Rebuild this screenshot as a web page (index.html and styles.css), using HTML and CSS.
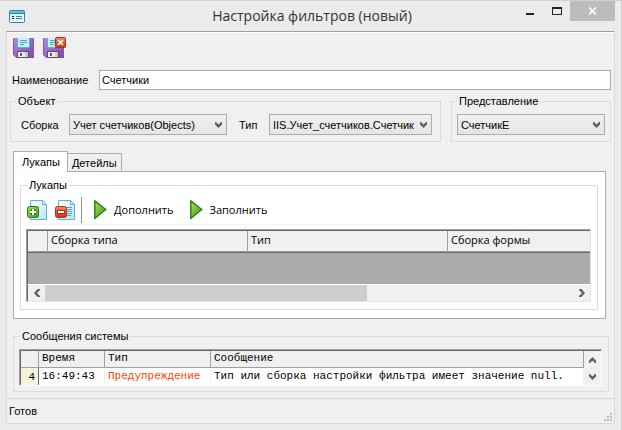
FILE: index.html
```html
<!DOCTYPE html>
<html lang="ru">
<head>
<meta charset="utf-8">
<title>Настройка фильтров (новый)</title>
<link rel="stylesheet" href="styles.css">
</head>
<body>
<svg class="defs" aria-hidden="true">
  <defs>
    <linearGradient id="violet" x2="1" y2="1"><stop offset="0" stop-color="#b58ae0"/><stop offset="1" stop-color="#7f45ae"/></linearGradient>
    <linearGradient id="paper" x2="1" y2="1"><stop offset="0" stop-color="#ffffff"/><stop offset="1" stop-color="#b4e6f4"/></linearGradient>
    <linearGradient id="green" x2="1" y2="1"><stop offset="0" stop-color="#a9dd5c"/><stop offset="1" stop-color="#3f9a1a"/></linearGradient>
    <linearGradient id="red" x2="0" y2="1"><stop offset="0" stop-color="#f58a64"/><stop offset="1" stop-color="#c9320f"/></linearGradient>
    <g id="disk">
      <path d="M0 0h21v20H3l-3-3z" fill="url(#violet)"/>
      <path d="M.5 .5v16M20.500 .5v19" stroke="#8a55b8" fill="none"/>
      <path d="M4 0h13v9l-1 1H5L4 9z" fill="#5eb0cf"/>
      <path d="M5 0h11v9H5z" fill="#c5f1fc"/>
      <path d="M7 2.500h7M7 4.500h7M7 6.500h4" stroke="#579fbb"/>
      <path d="M4 13h12v7H4z" fill="#555"/>
      <path d="M5 14h10v5H5z" fill="#eee"/>
      <path d="M7 15h2v3H7z" fill="#7648a8"/>
      <path d="M12 14h3v5h-3z" fill="#ccc"/>
    </g>
    <g id="sheet">
      <path d="M3.500 .5h12l4 4v15h-16z" fill="url(#paper)" stroke="#5db3d1"/>
      <path d="M15.500 .5v4h4z" fill="#e4f8ff" stroke="#5db3d1"/>
    </g>
    <path id="play" d="M.8 .8l11 8.700-11 9z" fill="url(#green)" stroke="#2b8713" stroke-width="1.500" stroke-linejoin="round"/>
    <path id="chevron" d="M1 0h1l2.500 2.500L7 0h1v2.500L4.500 6 1 2.500z" fill="#606060"/>
  </defs>
</svg>

<div class="window">
  <header class="titlebar">
    <svg class="app-icon" width="16" height="13" viewBox="0 0 16 13" aria-hidden="true">
      <rect x=".5" y=".5" width="15" height="12" rx="1" fill="#e6f5fa" stroke="#2a87a8"/>
      <path d="M1 1h14v2H1z" fill="#62c1df"/>
      <path d="M1 3.500h14" stroke="#2a87a8"/>
      <path d="M3 6h2v1H3zM3 8h2v1H3z" fill="#222"/>
      <path d="M7 6.500h6M7 8.500h6" stroke="#3987a5"/>
    </svg>
    <h1 class="title">Настройка фильтров (новый)</h1>
    <div class="caption-buttons">
      <button class="caption" type="button" aria-label="Свернуть"><svg width="8" height="8"><path d="M0 6h8v2H0z" fill="#222"/></svg></button>
      <button class="caption" type="button" aria-label="Развернуть"><svg width="10" height="8"><path d="M0 0h10v8H0zM1 2v5h8V2z" fill="#222" fill-rule="evenodd"/></svg></button>
      <button class="caption close" type="button" aria-label="Закрыть"><svg width="9" height="8" viewBox="0 0 9 8"><path d="M1 .5l7 7M8 .5l-7 7" stroke="#fff" stroke-width="1.700"/></svg></button>
    </div>
  </header>

  <main class="client">
    <div class="toolbar">
      <button class="tool" type="button" aria-label="Сохранить"><svg width="24" height="22"><use href="#disk" y="1"/></svg></button>
      <button class="tool" type="button" aria-label="Сохранить и закрыть">
        <svg width="24" height="22"><use href="#disk" y="1"/><rect x="12.500" y=".5" width="10" height="10" rx="1" fill="url(#red)" stroke="#a92e16"/><path d="M15 3l5 5M20 3l-5 5" stroke="#fff" stroke-width="1.500"/></svg>
      </button>
    </div>

    <div class="name-row">
      <label for="name">Наименование</label>
      <input id="name" type="text" value="Счетчики">
    </div>

    <div class="groups">
      <fieldset class="group object">
        <legend>Объект</legend>
        <div class="fields">
          <label for="assembly">Сборка</label>
          <div class="combo"><select id="assembly"><option>Учет счетчиков(Objects)</option></select><svg width="9" height="6"><use href="#chevron"/></svg></div>
          <label for="type" class="type-label">Тип</label>
          <div class="combo"><select id="type"><option>IIS.Учет_счетчиков.Счетчик</option></select><svg width="9" height="6"><use href="#chevron"/></svg></div>
        </div>
      </fieldset>
      <fieldset class="group view">
        <legend>Представление</legend>
        <div class="combo"><select aria-label="Представление"><option>СчетчикE</option></select><svg width="9" height="6"><use href="#chevron"/></svg></div>
      </fieldset>
    </div>

    <div class="tabs" role="tablist">
      <button class="tab active" type="button" role="tab" aria-selected="true">Лукапы</button>
      <button class="tab" type="button" role="tab" aria-selected="false">Детейлы</button>
    </div>
    <section class="panel" role="tabpanel">
      <fieldset class="group lookups">
        <legend>Лукапы</legend>
        <div class="grid-tools">
          <button class="tool" type="button" aria-label="Добавить">
            <svg width="22" height="21"><use href="#sheet"/><rect x=".5" y="6.500" width="11" height="11" rx="2" fill="url(#green)" stroke="#2b7d20"/><path d="M6 9v6M3 12h6" stroke="#2b7d20" stroke-width="4"/><path d="M6 9v6M3 12h6" stroke="#fff" stroke-width="2"/></svg>
          </button>
          <button class="tool" type="button" aria-label="Удалить">
            <svg width="22" height="21"><use href="#sheet"/><path d="M11 7.500h6M11 9.500h6M11 11.500h6M11 13.500h6M11 15.500h5" stroke="#4ba1c0"/><rect x=".5" y="6.500" width="11" height="11" rx="2" fill="url(#red)" stroke="#b83218"/><path d="M2 12h8" stroke="#a92c14" stroke-width="4"/><path d="M3 12h6" stroke="#fff" stroke-width="2"/></svg>
          </button>
          <span class="separator"></span>
          <button class="tool action" type="button"><svg width="13" height="20"><use href="#play"/></svg>Дополнить</button>
          <button class="tool action" type="button"><svg width="13" height="20"><use href="#play"/></svg>Заполнить</button>
        </div>
        <div class="grid">
          <div class="grid-view">
            <table class="lookup-table">
              <colgroup><col class="c-mark"><col><col><col></colgroup>
              <thead><tr><th></th><th>Сборка типа</th><th>Тип</th><th>Сборка формы</th></tr></thead>
            </table>
          </div>
          <div class="hscroll">
            <button type="button" aria-label="Влево"><svg width="6" height="8"><path d="M3.500 0H6v1L3 4l3 3v1H3.500L0 4z" fill="#606060"/></svg></button>
            <div class="track"><div class="thumb"></div></div>
            <button type="button" aria-label="Вправо"><svg width="6" height="8"><path d="M2.500 0H0v1l3 3-3 3v1h2.500L6 4z" fill="#606060"/></svg></button>
          </div>
        </div>
      </fieldset>
    </section>

    <fieldset class="group messages">
      <legend>Сообщения системы</legend>
      <div class="log">
        <table class="log-table">
          <colgroup><col class="l-num"><col class="l-time"><col class="l-type"><col></colgroup>
          <thead><tr><th></th><th>Время</th><th>Тип</th><th>Сообщение</th></tr></thead>
          <tbody><tr><th scope="row">4</th><td>16:49:43</td><td class="warning">Предупреждение</td><td>Тип или сборка настройки фильтра имеет значение null.</td></tr></tbody>
        </table>
        <div class="vscroll">
          <button type="button" aria-label="Вверх"><svg width="9" height="6"><path d="M1 6h1l2.500-2.500L7 6h1V3.500L4.500 0 1 3.500z" fill="#606060"/></svg></button>
          <button type="button" aria-label="Вниз"><svg width="9" height="6"><use href="#chevron"/></svg></button>
        </div>
      </div>
    </fieldset>

    <footer class="status">
      <span>Готов</span>
      <svg class="grip" width="8" height="8" aria-hidden="true"><path d="M6 0h2v2H6zM3 3h2v2H3zM6 3h2v2H6zM0 6h2v2H0zM3 6h2v2H3zM6 6h2v2H6z" fill="#bbb"/></svg>
    </footer>
  </main>
</div>
</body>
</html>
```

FILE: styles.css
```css
* { box-sizing: border-box; }

body {
  margin: 0;
  background: #ebebeb;
  color: #000;
  font: 11px/14px "Liberation Sans", Arial, sans-serif;
}

button, input, select { font: inherit; color: inherit; margin: 0; border-radius: 0; }
button { padding: 0; border: 0; background: none; }
svg { display: block; }
.defs { position: absolute; width: 0; height: 0; }

.window {
  display: flex;
  flex-direction: column;
  min-height: 100vh;
  padding: 0 6px 6px;
  border-top: 1px solid #d0d0d0;
  border-right: 1px solid #d0d0d0;
}

/* Title bar */
.titlebar {
  display: grid;
  grid-template-columns: 1fr auto 1fr;
  align-items: center;
  height: 30px;
  padding-left: 3px;
}
.title {
  margin: 0;
  color: #333;
  font: 14px/20px "Open Sans", "Noto Sans", sans-serif;
}
.caption-buttons { display: flex; justify-content: flex-end; align-self: start; }
.caption { display: grid; place-items: center; width: 27px; height: 20px; }
.close { width: 45px; background: #bcbcbc; }

/* Client area */
.client {
  display: flex;
  flex-direction: column;
  flex: 1;
  border: 1px solid #d9d9d9;
  border-top-color: #a0a0a0;
  background: #f0f0f0;
  box-shadow: inset 0 1px #fff;
}
.toolbar { display: flex; align-items: flex-start; gap: 6px; height: 38px; padding: 5px 6px; }

.name-row { display: flex; align-items: center; padding: 0 3px 0 5px; }
.name-row label { width: 87px; }
.name-row input {
  flex: 1;
  height: 20px;
  padding: 0 2px;
  border: 1px solid #ababb0;
  background: #fff;
}

/* Group boxes */
.group { min-width: 0; margin: 0; border: 1px solid #dcdcdc; }
.group legend { height: 14px; padding: 0 2px; }
.groups { display: flex; gap: 10px; margin-top: 4px; padding: 0 3px; }
.object { flex: 1; padding: 6px 8px 6px 5px; }
.view { width: 160px; padding: 6px 5px; }
.fields { display: grid; grid-template-columns: 48px 158px 42px 1fr; align-items: center; padding-left: 5px; }
.type-label { padding-left: 12px; }

.combo { display: grid; align-items: center; min-width: 0; }
.combo select, .combo svg { grid-area: 1 / 1; }
.combo select {
  appearance: none;
  width: 100%;
  height: 21px;
  padding: 0 16px 0 3px;
  border: 1px solid #acacac;
  background: linear-gradient(#f0f0f0, #e5e5e5);
}
.combo svg { justify-self: end; margin-right: 4px; pointer-events: none; }

/* Tabs */
.tabs { display: flex; align-items: flex-end; height: 20px; margin: 9px 8px 0 6px; }
.tab { height: 18px; padding: 0 4px; border: 1px solid #acacac; border-width: 1px 1px 0 0; }
.tab.active { height: 21px; margin-bottom: -1px; padding: 0 7px 0 8px; border-left-width: 1px; background: #fff; z-index: 1; }
.panel {
  display: flex;
  flex: 1;
  margin: 0 8px 0 6px;
  padding: 6px 7px 8px 6px;
  border: 1px solid #acacac;
  background: #fff;
}
.lookups { display: flex; flex-direction: column; flex: 1; padding: 0 6px 7px 5px; }
.lookups legend, .messages legend { margin-left: 1px; }

.grid-tools { display: flex; align-items: flex-start; height: 33px; padding: 8px 0 0 1px; border-bottom: 1px solid #f5f5f5; }
.grid-tools .tool + .tool { margin-left: 6px; }
.separator { width: 1px; height: 26px; margin: -3px 12px 0 4px; background: #909090; }
.action { display: flex; align-items: center; gap: 7px; height: 20px; font: 11px/14px "Open Sans", "Noto Sans", sans-serif; }
.grid-tools .action + .action { margin-left: 16px; }

/* Lookup grid */
.grid {
  display: flex;
  flex-direction: column;
  flex: 1;
  margin-top: 4px;
  border: 1px solid #a0a0a0;
  border-right-color: #e3e3e3;
  border-bottom-color: #e3e3e3;
}
.grid-view { flex: 1; min-height: 54px; overflow: hidden; border-top: 1px solid #696969; border-left: 1px solid #696969; background: #ababab; }
table { border-spacing: 0; table-layout: fixed; }
th { font-weight: normal; text-align: left; }
.lookup-table { width: 620px; }
.lookup-table col { width: 200px; }
.lookup-table col.c-mark { width: 20px; }
.lookup-table th {
  height: 22px;
  padding: 0 3px 4px;
  border-right: 1px solid #a0a0a0;
  border-bottom: 1px solid #696969;
  background: #f0f0f0;
  box-shadow: inset 0 -1px #a0a0a0;
  font: 11px/14px "Open Sans", "Noto Sans", sans-serif;
}
.hscroll { display: flex; height: 17px; border-top: 1px solid #fff; border-left: 1px solid #696969; background: #f0f0f0; }
.hscroll button { display: grid; place-items: center; width: 17px; }
.track { flex: 1; }
.thumb { width: 61%; height: 100%; background: #cdcdcd; }

/* System messages */
.messages { margin: 10px 5px 0 6px; padding: 6px 6px 5px 5px; }
.log {
  display: flex;
  height: 37px;
  border: 1px solid #a0a0a0;
  border-right-color: #fff;
  border-bottom-color: #fff;
  box-shadow: inset 1px 1px #696969;
  background: #fff;
  padding: 1px 0 0 1px;
}
.log-table { flex: 1; width: 100%; font-family: "Liberation Mono", "Courier New", monospace; }
.l-num { width: 18px; }
.l-time { width: 66px; }
.l-type { width: 106px; }
.log-table th, .log-table td { height: 17px; padding: 0 3px 2px; white-space: nowrap; }
.log-table thead th { border-right: 1px solid #a0a0a0; border-bottom: 1px solid #a0a0a0; background: #f0f0f0; }
.log-table td { border-right: 1px solid #f0f0f0; }
.log-table tbody th { padding-bottom: 0; border-right: 1px solid #696969; background: #f5f5dc; text-align: right; }
.log-table .warning { color: #ff4500; }
.vscroll { display: flex; flex-direction: column; width: 17px; background: #f0f0f0; }
.vscroll button { display: grid; flex: 1; place-items: center; }

/* Status bar */
.status {
  display: flex;
  align-items: center;
  justify-content: space-between;
  height: 25px;
  margin-top: 6px;
  padding: 0 2px;
  border-top: 1px solid #d7d7d7;
}
.grip { align-self: flex-end; margin-bottom: 2px; }
```
